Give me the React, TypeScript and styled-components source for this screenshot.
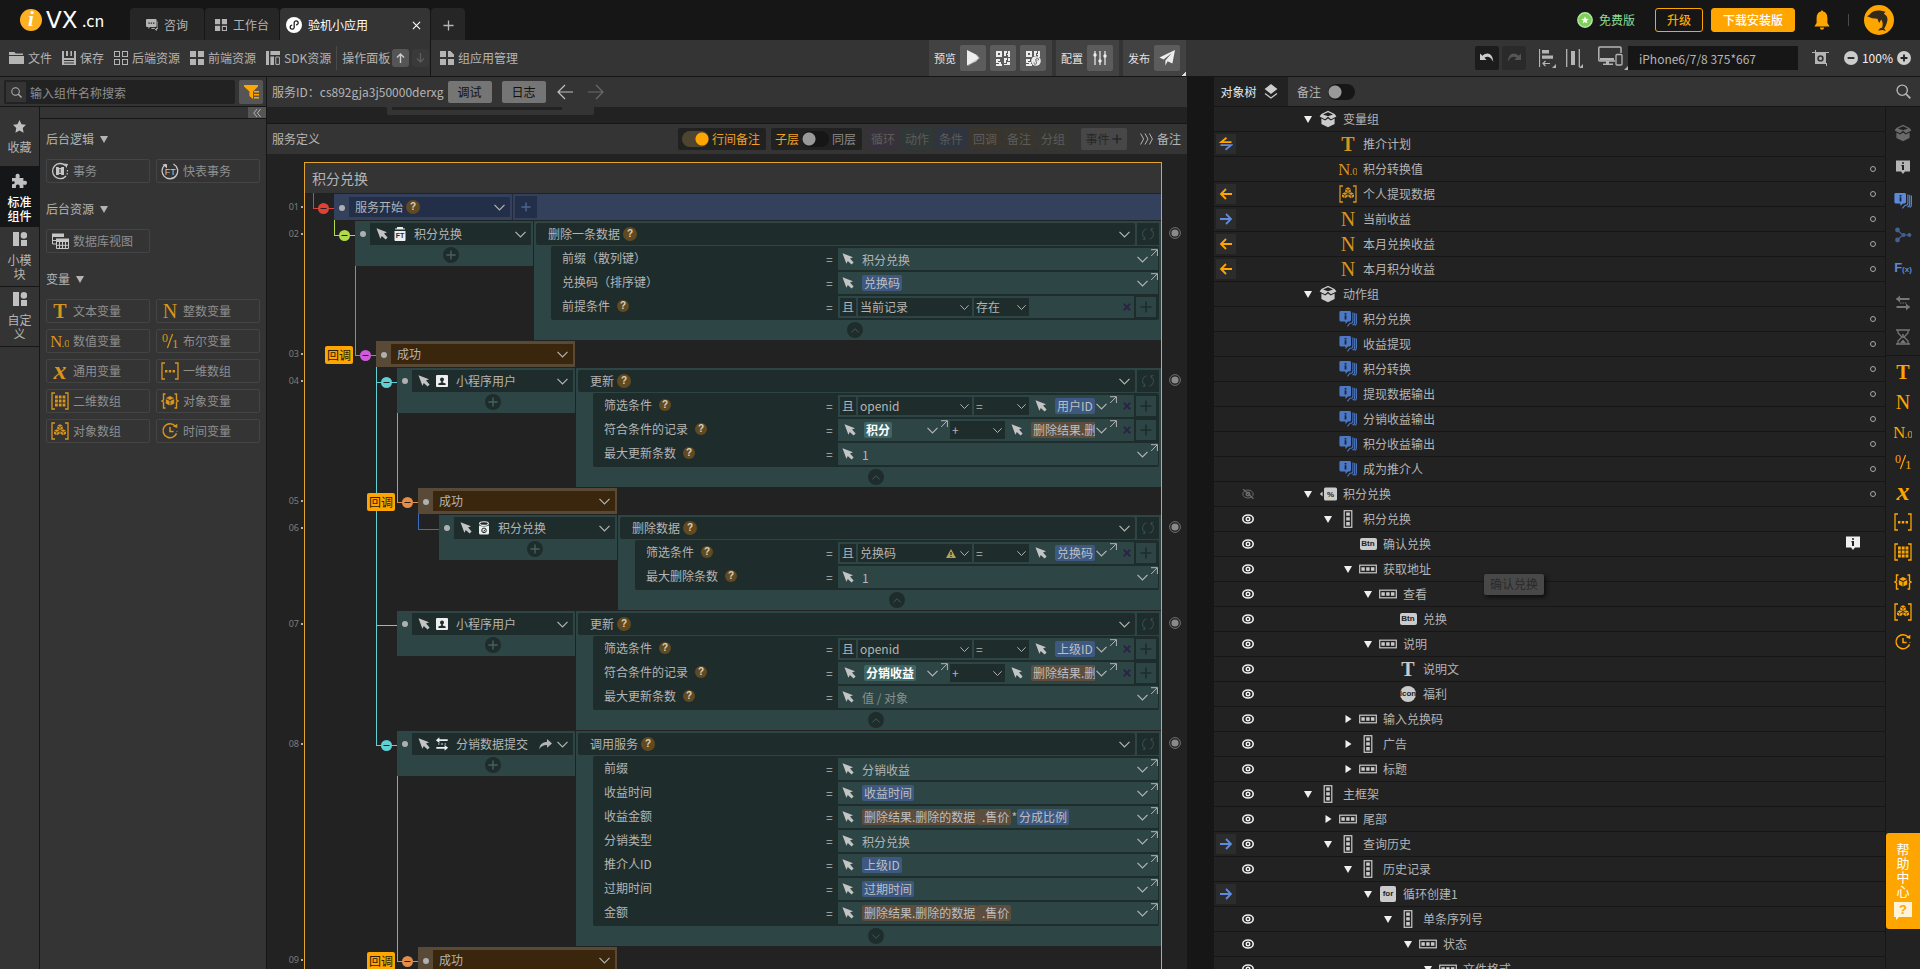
import React from "react";
import styled, { createGlobalStyle, css } from "styled-components";

const C = {
  black: "#161616",
  canvas: "#222222",
  panel: "#343434",
  text: "#b4b4b4",
  orange: "#ffa500",
  amber: "#d8941c",
  teal: "#2d4645",
  tealDark: "#1e2d2c",
  blue: "#5e8bdc",
};

const Global = createGlobalStyle`
  * { box-sizing: border-box; }
  body { margin: 0; background: ${C.black}; }
  body, button, input, select {
    font-family: "Noto Sans CJK SC", "Noto Sans", sans-serif;
    font-size: 12px;
    line-height: 16px;
    color: ${C.text};
  }
  button, input, select { border: 0; padding: 0; margin: 0; background: none; outline: 0; border-radius: 0; }
  button { cursor: pointer; display: inline-flex; align-items: center; justify-content: center; }
  select { appearance: none; cursor: pointer; }
  svg { display: block; flex: none; }
`;

/* ---------- icons ---------- */

const Svg = ({ w = 18, h, vb, children, color = "currentColor" }: any) => (
  <svg width={w} height={h ?? w} viewBox={vb ?? `0 0 ${w} ${h ?? w}`} fill={color} color={color === "currentColor" ? undefined : color} aria-hidden="true">
    {children}
  </svg>
);
const line = (sw = 1) => ({ fill: "none", stroke: "currentColor", strokeWidth: sw });

const Chevron = ({ w = 11 }: any) => (
  <Svg w={w} h={7} vb="0 0 11 7"><path d="M.5 .8 5.5 6 10.5 .8" {...line(1.2)} /></Svg>
);
const Corner = () => (
  <Svg w={8} vb="0 0 8 8"><path d="M1 .7H7.4V7M7.2 .8 1.2 7" {...line(1)} /></Svg>
);
const Pointer = () => (
  <Svg w={12} vb="0 0 12 12" color="#c4c4c4"><path d="M.5 .3 11 4.2 8 5.6 11.6 9.6 9.6 11.6 5.8 8 4.4 10.8Z" /></Svg>
);
const Plus = ({ w = 10, sw = 1.4 }: any) => (
  <Svg w={w} vb="0 0 10 10"><path d="M5 .4V9.6M.4 5H9.6" {...line(sw)} /></Svg>
);
const Cross = ({ w = 8 }: any) => (
  <Svg w={w} vb="0 0 8 8"><path d="M.8 .8 7.2 7.2M7.2 .8 .8 7.2" {...line(2)} /></Svg>
);
const Search = ({ w = 12 }: any) => (
  <Svg w={w} vb="0 0 14 14"><circle cx="5.8" cy="5.8" r="4.8" {...line(1.3)} /><path d="M9.3 9.3 13.4 13.4" {...line(1.6)} /></Svg>
);
const Refresh = () => (
  <Svg w={14} vb="0 0 14 14"><path d="M5.5 1.8A5.4 5.4 0 0 0 4 11.6M8.5 12.2A5.4 5.4 0 0 0 10 2.4M3 9.4 4.2 12.2 1.6 12.4M11 4.6 9.8 1.8 12.4 1.6" {...line(1)} /></Svg>
);
const Break = () => (
  <Svg w={12} vb="0 0 12 12" color="#8a8a8a"><circle cx="6" cy="6" r="5.4" fill="none" stroke="#707070" /><circle cx="6" cy="6" r="3.6" /></Svg>
);
const Squares = ({ outline }: any) => (
  <Svg w={14}>
    {[[0, 0], [8, 0], [0, 8], [8, 8]].map(([x, y]) => (
      <rect key={`${x}${y}`} x={x + (outline ? 0.5 : 0)} y={y + (outline ? 0.5 : 0)} width={outline ? 5 : 6} height={outline ? 5 : 6} {...(outline ? line(1) : {})} />
    ))}
  </Svg>
);
const Qr = ({ link }: any) => (
  <Svg w={16}>
    <path d="M1 1H7V7H1ZM3 3V5H5V3ZM1 9H5V11H3V12H6V14H7V16H1V14H4V13H1ZM9 1H12V3H11V6H9ZM13 1H15V7H13V5H12V4H13Z" fillRule="evenodd" />
    {link ? <><circle cx="11" cy="11" r="4.8" /><path d="M9 12.5a1.3 1.3 0 1 0 2-.6V10a1.3 1.3 0 1 1 1.6.6" fill="none" stroke="#5c5c5c" /></> : <path d="M9 8H12V10H11V13H9ZM13 8H15V11H13ZM12 12H15V15H9V14H12Z" />}
  </Svg>
);
const Cluster = () => (
  <g>
    {[[9, 4.6], [5.8, 9.6], [12.2, 9.6]].map(([x, y], i) => (
      <g key={i}><path d={`M${x} ${y - 2.4} ${x + 2.6} ${y - 1} ${x} ${y + 0.3} ${x - 2.6} ${y - 1}Z`} /><path d={`M${x - 2.8} ${y - 0.4} ${x - 0.3} ${y + 0.9}V${y + 3.6}L${x - 2.8} ${y + 2.2}ZM${x + 2.8} ${y - 0.4} ${x + 0.3} ${y + 0.9}V${y + 3.6}L${x + 2.8} ${y + 2.2}Z`} /></g>
    ))}
  </g>
);
const Brackets = () => <path d="M4 1H1V17H4M14 1H17V17H14" {...line(1.3)} />;

const Letter = styled.span<{ $size: number; $bold?: boolean; $italic?: boolean }>`
  font-family: "Liberation Serif", serif;
  font-size: ${(p) => p.$size}px;
  font-weight: ${(p) => (p.$bold ? 700 : 400)};
  font-style: ${(p) => (p.$italic ? "italic" : "normal")};
  line-height: 18px;
`;
const IconBox = styled.span<{ $w?: number; $color?: string }>`
  display: inline-flex;
  align-items: center;
  justify-content: center;
  flex: none;
  width: ${(p) => p.$w ?? 18}px;
  height: 18px;
  white-space: nowrap;
  color: ${(p) => p.$color ?? "inherit"};
`;
const Badge = styled.span<{ $round?: boolean; $square?: boolean }>`
  display: inline-flex;
  align-items: center;
  justify-content: center;
  width: ${(p) => (p.$round || p.$square ? 16 : 17)}px;
  height: ${(p) => (p.$round || p.$square ? 16 : 12)}px;
  border-radius: ${(p) => (p.$round ? "50%" : "2px")};
  background: #cbcbcb;
  color: #222;
  font: 700 8px/10px "Liberation Sans", sans-serif;
`;
const FxText = styled.span`
  font: 700 13px/18px "Liberation Sans", sans-serif;
  small { font-size: 8px; }
`;

const Icon = ({ name, color }: { name: string; color?: string }) => {
  let body: React.ReactNode = null;
  switch (name) {
    case "T": body = <Letter $size={20} $bold>T</Letter>; break;
    case "N": body = <Letter $size={20}>N</Letter>; break;
    case "N0": body = <Svg><text x="-1" y="14.5" fontSize="17" fontFamily="Liberation Serif">N</text><text x="10.5" y="14.5" fontSize="11" fontFamily="Liberation Serif">.0</text></Svg>; break;
    case "01": body = <Svg><text x="1" y="10" fontSize="12" fontFamily="Liberation Serif">0</text><path d="M11.6 2 6.4 16" {...line(1.2)} /><text x="11" y="16" fontSize="13" fontFamily="Liberation Serif">1</text></Svg>; break;
    case "X": body = <Letter $size={26} $bold $italic>x</Letter>; break;
    case "list": body = <Svg><Brackets /><path d="M4 8H6.4V10.4H4ZM7.8 8H10.2V10.4H7.8ZM11.6 8H14V10.4H11.6Z" /></Svg>; break;
    case "grid": body = <Svg><Brackets /><path d="M4 3.5H14.4V14.5H4Z" /><path d="M7.3 3V15M11.1 3V15M4 7H14.5M4 11H14.5" stroke="#2c2c2c" strokeWidth="1" /></Svg>; break;
    case "object": body = <Svg><path d="M4.5 2H2.5V8L1 9 2.5 10V16H4.5M13.5 2H15.5V8L17 9 15.5 10V16H13.5" {...line(1.4)} /><path d="M9 4 13 6 9 8 5 6ZM4.8 7 8.6 9V13.6L4.8 11.6ZM13.2 7 9.4 9V13.6L13.2 11.6Z" /></Svg>; break;
    case "objects": body = <Svg><Brackets /><Cluster /></Svg>; break;
    case "time": body = <Svg><path d="M14.4 4.2A7 7 0 1 0 16 9.4" {...line(1.5)} strokeDasharray="36 1.5 2 1.5" /><path d="M9 5V9.6H12.6" {...line(1.5)} /><path d="M12 4.6 16.4 1.8 16.2 6Z" /></Svg>; break;
    case "tx": body = <Svg><path d="M14.4 3.6A7.6 7.6 0 1 0 15 14" {...line(1.3)} /><path d="M13 1.6 17 2 15.4 6Z" /><path d="M5 5H7.8V6H10.2V5H13V13H10.2V12H7.8V13H5ZM8.4 7V11H9.6V7Z" /><path d="M16.4 8V9.6M16.2 11V12.6" {...line(1.2)} /></Svg>; break;
    case "ft": body = <Svg><path d="M5 2.2A7.8 7.8 0 1 0 12.4 2" {...line(1.3)} /><path d="M1.4 2.2H6V6.4Z" /><text x="9.2" y="12.6" fontSize="9" textAnchor="middle" fontFamily="Liberation Sans">FT</text></Svg>; break;
    case "table": body = <Svg><path d="M1 1.5H13V5H1ZM5 6.5H18V10H5Z" /><path d="M1.5 5V12H5M1.5 8.5H5M5.5 10V16.5H17.5V10M5.5 13.3H17.5M8.5 10V16.5M11.5 10V16.5M14.5 10V16.5" {...line(1)} /></Svg>; break;
    case "box": body = <Svg><path d="M9 .8 15.6 4 17.4 6.4 12 9.2 9 6.8 6 9.2 .6 6.4 2.4 4ZM9 2.2 4 4.4 9 6.2 14 4.4Z" fillRule="evenodd" /><path d="M2.4 8.6 6.2 10.4 9 8.4 11.8 10.4 15.6 8.6V14L9 17.2 2.4 14Z" /></Svg>; break;
    case "action": body = <Svg><path d="M1.6 1H10.6Q12 1 12 2.4V10Q12 11.4 10.6 11.4H9L6.6 14 6.4 11.4H1.6Q.4 11.4 .4 10V2.4Q.4 1 1.6 1Z" /><path d="M13.9 2.4V11Q13.9 13.2 12 13.2H11L8.4 16.4M15.7 3V12Q15.7 14.8 13.4 14.8M17.4 3.6V13Q17.4 15 15.6 15.4" {...line(1.1)} /><path d="M5.6 3H7.4V4.4H5.6ZM5.6 5.2H7.4V9.4H5.6Z" fill="#1b2540" /></Svg>; break;
    case "info": body = <Svg><path d="M2 2.5H16V13.5H11L9 16 7 13.5H2Z" /><path d="M8 4.2H10V5.8H8ZM7.4 7H10V12H8V8.2H7.4Z" fill="#222" /></Svg>; break;
    case "nodes": body = <Svg><circle cx="3.5" cy="4" r="2.4" /><circle cx="3.5" cy="14" r="2.4" /><circle cx="9.6" cy="9" r="2" /><circle cx="15.4" cy="9" r="2" /><path d="M3 4 9 9 3 14M9 9H16" {...line(1.2)} /></Svg>; break;
    case "fx": body = <FxText>F<small>(x)</small></FxText>; break;
    case "swap": body = <Svg><path d="M2.5 4H15.5V6H2.5ZM2.5 12H15.5V14H2.5Z" /><path d="M6 1.6 2 5 6 8.4ZM12 9.6 16 13 12 16.4Z" /><path d="M6 9H7.4M8.4 9H9.8M10.8 9H12.2" {...line(1.2)} /></Svg>; break;
    case "glass": body = <Svg><path d="M2 2H16M2 16H16M4 2V5L8 9 4 13V16M14 2V5L10 9 14 13V16" {...line(1.3)} /><path d="M6 15 9 11.6 12 15ZM8.2 6H9.8V10H8.2Z" /></Svg>; break;
    case "percent": body = <Svg><path d="M3.6 6.5 .8 9 3.6 11.5Z" /><rect x="5" y="2.5" width="13" height="13" rx="1.6" /><text x="11.5" y="12" fontSize="8" fontWeight="700" fill="#222" textAnchor="middle" fontFamily="Liberation Sans">%</text></Svg>; break;
    case "v": body = <Svg><rect x="5.2" y=".7" width="7.6" height="16.6" {...line(1.2)} /><path d="M7.2 2.4H10.8V5.8H7.2ZM7.2 7.2H10.8V10.6H7.2ZM7.2 12H10.8V15.4H7.2Z" /></Svg>; break;
    case "h": body = <Svg><rect x=".7" y="5.2" width="16.6" height="7.6" {...line(1.2)} /><path d="M2.4 7.2H5.8V10.8H2.4ZM7.2 7.2H10.6V10.8H7.2ZM12 7.2H15.4V10.8H12Z" /></Svg>; break;
    case "btn": body = <Badge>Btn</Badge>; break;
    case "ico": body = <Badge $round>Icon</Badge>; break;
    case "for": body = <Badge $square>for</Badge>; break;
  }
  return <IconBox $color={color}>{body}</IconBox>;
};

/* ---------- top bar ---------- */

const Page = styled.div`
  display: flex;
  flex-direction: column;
  height: 100vh;
  overflow: hidden;
  background: ${C.black};
`;
const TopBar = styled.header`
  display: flex;
  height: 40px;
  flex: none;
  align-items: stretch;
`;
const Logo = styled.a`
  display: flex;
  align-items: center;
  width: 130px;
  padding-left: 20px;
  color: #fff;
  text-decoration: none;
`;
const LogoDot = styled.span`
  width: 22px;
  height: 22px;
  margin-right: 4px;
  border-radius: 50%;
  background: #fdb022;
  font: italic 700 21px/21px "Liberation Serif", serif;
  text-align: center;
`;
const LogoName = styled.span`
  width: 36px;
  font: 23px/24px "DejaVu Sans", sans-serif;
`;
const LogoTld = styled.span`font: 16px/24px "Noto Sans CJK SC", sans-serif;`;
const Tabs = styled.nav`
  display: flex;
  align-items: flex-end;
  gap: 1px;
`;
const Tab = styled.button<{ $w: number; $active?: boolean }>`
  width: ${(p) => p.$w}px;
  height: 32px;
  padding: ${(p) => (p.$active ? "2px 9px 0 6px" : "2px 6px 0")};
  gap: 6px;
  border-radius: 4px 4px 0 0;
  background: ${(p) => (p.$active ? C.panel : "#262626")};
  color: ${(p) => (p.$active ? "#fff" : C.text)};
  justify-content: ${(p) => (p.$active ? "flex-start" : "center")};
  svg:last-child:not(:first-child) { margin-left: auto; }
`;
const TopRight = styled.div`
  display: flex;
  align-items: center;
  margin-left: auto;
  padding-right: 26px;
`;
const Free = styled.span`
  display: flex;
  align-items: center;
  gap: 6px;
  margin-right: 20px;
  color: #8fdc90;
`;
const Cta = styled.button<{ $solid?: boolean }>`
  height: 24px;
  width: ${(p) => (p.$solid ? 84 : 48)}px;
  margin-right: ${(p) => (p.$solid ? 19 : 8)}px;
  border: 1px solid ${C.orange};
  border-radius: 3px;
  background: ${(p) => (p.$solid ? C.orange : "transparent")};
  color: ${(p) => (p.$solid ? "#fff" : C.orange)};
  font-weight: 500;
`;
const ThinRule = styled.span`
  width: 1px;
  height: 12px;
  margin: 0 15px 0 18px;
  background: #4a4a4a;
`;

/* ---------- toolbar ---------- */

const Toolbar = styled.div`
  display: flex;
  align-items: center;
  flex: none;
  height: 37px;
  border-bottom: 1px solid ${C.black};
  background: ${C.panel};
`;
const ToolGroup = styled.div`
  display: flex;
  align-items: center;
  width: 430px;
  height: 36px;
  gap: 10px;
  padding-left: 9px;
`;
const Tool = styled.button`
  gap: 4px;
  height: 24px;
`;
const Rule = styled.span`
  width: 1px;
  height: 24px;
  margin: 0 -5px 0 -5px;
  background: #4a4a4a;
`;
const MoveBtns = styled.span`
  display: flex;
  gap: 3px;
  margin-left: -8px;
`;
const MoveBtn = styled.button<{ $dim?: boolean }>`
  width: 17px;
  height: 18px;
  border-radius: 3px;
  background: ${(p) => (p.$dim ? "#3a3a3a" : "#555")};
  color: ${(p) => (p.$dim ? "#5c5c5c" : "#ccc")};
`;
const AppManage = styled.div`
  display: flex;
  align-items: center;
  height: 36px;
  padding-left: 9px;
  border-left: 1px solid ${C.black};
`;
const RunGroups = styled.div`
  display: flex;
  gap: 4px;
  margin-left: 411px;
`;
const RunGroup = styled.div<{ $corner?: boolean }>`
  display: flex;
  align-items: center;
  gap: 4px;
  height: 36px;
  padding: 0 6px 0 5px;
  background: ${(p) => (p.$corner ? "linear-gradient(135deg, transparent 50%, #ddd 50%) right bottom / 4px 4px no-repeat, #424242" : "#424242")};
  color: #e4e4e4;
  font-size: 11px;
`;
const RunBtn = styled.button`
  width: 26px;
  height: 26px;
  border-radius: 2px;
  background: #5c5c5c;
  color: #eee;
`;
const ViewTools = styled.div`
  display: flex;
  align-items: center;
  margin-left: auto;
  padding-right: 9px;
`;
const HistBtn = styled.button<{ $dim?: boolean }>`
  width: 24px;
  height: 24px;
  margin-right: 3px;
  border-radius: 2px;
  background: ${(p) => (p.$dim ? "#2a2a2a" : "#1c1c1c")};
  color: ${(p) => (p.$dim ? "#555" : "#ccc")};
`;
const ViewBtn = styled.button`
  margin-left: 10px;
  width: 17px;
  height: 20px;
`;
const DeviceBtn = styled.button`
  width: 30px;
  height: 24px;
  margin-left: 15px;
`;
const DeviceInput = styled.input`
  width: 170px;
  height: 24px;
  margin-right: 14px;
  padding: 0 11px;
  background: ${C.black};
`;
const Zoom = styled.span`
  display: flex;
  align-items: center;
  gap: 4px;
  margin-left: 15px;
  color: #f0f0f0;
`;

/* ---------- body ---------- */

const Body = styled.div`
  display: flex;
  flex: 1;
  min-height: 0;
`;
const Left = styled.aside`
  display: flex;
  flex-direction: column;
  flex: none;
  width: 267px;
  background: ${C.panel};
  border-right: 1px solid ${C.black};
`;
const SearchRow = styled.div`
  display: flex;
  gap: 4px;
  height: 30px;
  padding: 3px 3px 0 4px;
  border-bottom: 1px solid ${C.black};
`;
const SearchField = styled.label`
  display: flex;
  align-items: center;
  flex: 1;
  height: 24px;
  padding-left: 2px;
  border-radius: 2px;
  background: ${C.canvas};
`;
const SearchIcon = styled.span`
  display: flex;
  align-items: center;
  justify-content: center;
  width: 20px;
  height: 20px;
  background: ${C.panel};
`;
const SearchInput = styled.input`
  flex: 1;
  min-width: 0;
  height: 24px;
  padding-left: 4px;
  &::placeholder { color: #8e8e8e; opacity: 1; }
`;
const FilterBtn = styled.button`
  width: 24px;
  height: 24px;
  border-radius: 2px;
  background: #555;
  color: ${C.orange};
`;
const LeftBody = styled.div`
  display: flex;
  flex: 1;
  min-height: 0;
`;
const Rail = styled.nav`
  width: 40px;
  border-right: 1px solid ${C.black};
`;
const RailItem = styled.button<{ $active?: boolean; $h: number }>`
  display: flex;
  flex-direction: column;
  justify-content: flex-start;
  width: 39px;
  height: ${(p) => p.$h}px;
  padding: ${(p) => (p.$active ? 7 : 5)}px 6px 0;
  gap: 7px;
  line-height: 14px;
  border-bottom: 1px solid ${(p) => (p.$h > 59 ? C.black : C.panel)};
  background: ${(p) => (p.$active ? "#151617" : "none")};
  color: ${(p) => (p.$active ? "#fff" : C.text)};
  font-weight: ${(p) => (p.$active ? 500 : 400)};
  svg { color: #c0c0c0; }
`;
const RailPad = styled.span`height: 1px;`;
const Palette = styled.div`flex: 1;`;
const CollapseRow = styled.div`
  display: flex;
  justify-content: flex-end;
  height: 12px;
  border-bottom: 1px solid ${C.black};
`;
const Collapse = styled.button`
  width: 18px;
  height: 11px;
  background: #555;
`;
const Section = styled.section`
  padding: 0 6px;
  margin-bottom: 6px;
`;
const SectionHead = styled.h2`
  display: flex;
  align-items: center;
  gap: 6px;
  height: 40px;
  margin: 0;
  font-size: 12px;
  font-weight: 400;
`;
const Grid = styled.div`
  display: grid;
  grid-template-columns: 104px 104px;
  gap: 6px;
`;
const PaletteBtn = styled.button`
  justify-content: flex-start;
  gap: 4px;
  height: 24px;
  padding-left: 4px;
  border: 1px solid #444;
  border-radius: 2px;
  color: #8f8f8f;
`;

/* ---------- editor ---------- */

const Center = styled.main`
  display: flex;
  flex-direction: column;
  flex: 1;
  min-width: 0;
  background: ${C.canvas};
`;
const ServiceBar = styled.div`
  display: flex;
  align-items: center;
  flex: none;
  height: 30px;
  padding-left: 5px;
  background: ${C.panel};
`;
const ServiceId = styled.span`margin-right: -6px;`;
const GreyBtn = styled.button`
  width: 44px;
  height: 22px;
  margin-left: 10px;
  border-radius: 2px;
  background: #757575;
  color: #111;
`;
const ArrowBtn = styled.button<{ $dim?: boolean }>`
  width: 16px;
  margin-left: ${(p) => (p.$dim ? 15 : 11)}px;
  color: ${(p) => (p.$dim ? "#6a6a6a" : "#c0c0c0")};
`;
const Strip = styled.div`
  flex: none;
  height: 17px;
  padding-left: 120px;
  border-bottom: 1px solid ${C.black};
`;
const StripCard = styled.div`
  width: 207px;
  height: 8px;
  padding-left: 5px;
  border-radius: 0 0 2px 2px;
  background: ${C.panel};
`;
const StripSlot = styled.div`
  width: 170px;
  height: 3px;
  background: ${C.canvas};
`;
const DefBar = styled.div`
  display: flex;
  align-items: center;
  flex: none;
  height: 30px;
  padding: 0 6px 0 5px;
  background: ${C.panel};
`;
const Push = styled.span`flex: 1;`;
const Pill = styled.label`
  display: flex;
  align-items: center;
  gap: 3px;
  height: 22px;
  margin-right: 5px;
  padding: 0 6px 0 4px;
  border-radius: 2px;
  background: #212121;
  color: #8c8c8c;
`;
const Hot = styled.span`color: #f0a126;`;
const Switch = styled.input<{ $tone: string }>`
  appearance: none;
  width: 27px;
  height: 16px;
  border-radius: 8px;
  background: radial-gradient(circle at 7px 8px, #999 0 6px, transparent 7px), ${C.black};
  &:checked { background: radial-gradient(circle at 20px 8px, ${C.orange} 0 6px, transparent 7px), ${(p) => p.$tone}; }
`;
const Chip = styled.button<{ $bg: string }>`
  width: 32px;
  height: 22px;
  margin-right: 2px;
  border-radius: 2px;
  background: ${(p) => p.$bg};
  color: #5c5c5c;
`;
const EventBtn = styled.button`
  width: 46px;
  height: 22px;
  margin: 0 13px 0 10px;
  gap: 3px;
  border-radius: 2px;
  background: #474747;
  color: #272727;
`;
const NoteBtn = styled.button`gap: 4px;`;

const Canvas = styled.div`
  position: relative;
  flex: 1;
  min-height: 0;
  overflow: hidden;
  padding-top: 8px;
`;
const Links = styled.svg`
  position: absolute;
  left: 0;
  top: 0;
`;
const Row = styled.div`
  position: relative;
  display: grid;
  grid-template-columns: 37px minmax(0, 1fr) 25px;
`;
const LineNo = styled.span`
  display: flex;
  align-items: center;
  justify-content: flex-end;
  gap: 2px;
  height: 27px;
  padding-right: 1px;
  color: #7d7d7d;
  font: 9px/12px "Noto Sans", sans-serif;
  &::after { content: ""; width: 2px; height: 2px; background: #b0b0b0; }
`;
const Framed = styled.div`
  display: flex;
  align-items: flex-start;
  min-width: 0;
  padding-top: 1px;
  border: solid #e3a52f;
  border-width: 0 1px;
`;
const FrameTitle = styled.h1`
  height: 31px;
  margin: 0;
  padding-left: 7px;
  border: 1px solid #e3a52f;
  border-bottom: 0;
  background: ${C.panel};
  font-size: 14px;
  font-weight: 400;
  line-height: 30px;
`;
const BreakBtn = styled.button`
  height: 12px;
  margin-top: 7px;
`;
const Indent = styled.div<{ $level: number }>`
  display: flex;
  justify-content: flex-end;
  flex: none;
  width: ${(p) => 29 + 21 * p.$level}px;
`;
const CallbackTag = styled.span`
  width: 28px;
  height: 18px;
  margin: 5px 23px 0 0;
  border-radius: 2px;
  background: ${C.orange};
  color: #2a2005;
  line-height: 18px;
  text-align: center;
`;
const dot = css`
  &::before {
    content: "";
    flex: none;
    width: 6px;
    height: 6px;
    margin: 8px 4px 0 3px;
    border-radius: 50%;
    background: #b0b0b0;
  }
`;
const EventBlock = styled.div<{ $kind: "start" | "callback" }>`
  display: flex;
  flex: ${(p) => (p.$kind === "start" ? 1 : "none")};
  width: ${(p) => (p.$kind === "start" ? "auto" : "199px")};
  height: 26px;
  padding: 3px 2px;
  background: ${(p) => (p.$kind === "start" ? "#33415d" : "#594a37")};
  ${dot}
`;
const EventBox = styled.div<{ $kind: "start" | "callback" }>`
  display: flex;
  align-items: center;
  flex: ${(p) => (p.$kind === "start" ? "none" : 1)};
  width: 161px;
  height: 20px;
  padding: 0 5px 0 6px;
  background: ${(p) => (p.$kind === "start" ? "#232f48" : "#39260c")};
`;
const AddStep = styled.button`
  width: 26px;
  height: 26px;
  margin: -3px 0 0 2px;
  border-left: 1px solid #222b3e;
  background: linear-gradient(#232f48, #232f48) 2px 2px / 22px 22px no-repeat;
  color: #4a6694;
`;
const End = styled.span`
  display: flex;
  align-items: center;
  gap: 5px;
  margin-left: auto;
  color: #b4b4b4;
`;
const Help = styled.button<{ $s: number }>`
  flex: none;
  width: ${(p) => p.$s}px;
  height: ${(p) => p.$s}px;
  margin-left: ${(p) => (p.$s === 14 ? 2 : 7)}px;
  border-radius: 50%;
  background: #614a22;
  color: #ddd0b4;
  font: 700 10px/12px "Liberation Sans", sans-serif;
`;
const ObjectBlock = styled.div`
  display: flex;
  flex: none;
  width: 178px;
  height: 45px;
  margin-right: 1px;
  padding: 2px;
  background: ${C.teal};
  ${dot}
`;
const ObjectCol = styled.div`
  display: flex;
  flex-direction: column;
  align-items: center;
  flex: 1;
  gap: 2px;
`;
const ObjectBox = styled.div`
  display: flex;
  align-items: center;
  align-self: stretch;
  height: 22px;
  padding: 0 5px 0 6px;
  background: ${C.tealDark};
`;
const ObjectIcon = styled.span`
  display: flex;
  justify-content: center;
  width: 14px;
  margin: 0 7px 0 5px;
  color: #eee;
`;
const RoundBtn = styled.button`
  width: 16px;
  height: 16px;
  border-radius: 50%;
  background: ${C.tealDark};
  color: #47605e;
`;
const ActionBlock = styled.div`
  flex: 1;
  min-width: 0;
  padding: 2px 2px 0;
  background: ${C.teal};
`;
const ActionHead = styled.div`
  display: flex;
  gap: 2px;
  height: 22px;
`;
const ActionName = styled.div`
  display: flex;
  align-items: center;
  flex: 1;
  padding: 0 5px 0 12px;
  border-radius: 2px;
  background: ${C.tealDark};
`;
const RefreshBtn = styled.button`
  width: 22px;
  height: 22px;
  background: ${C.tealDark};
  color: #35504e;
`;
const Params = styled.div`
  margin: 1px 0 0 15px;
  padding: 2px 1px 0 11px;
  border-radius: 2px;
  background: ${C.tealDark};
`;
const ParamRow = styled.div`
  display: flex;
  height: 24px;
`;
const ParamLabel = styled.span`
  display: flex;
  align-items: center;
  flex: 1;
  height: 20px;
`;
const Eq = styled.span`
  width: 12px;
  line-height: 22px;
`;
const Value = styled.div`
  position: relative;
  display: flex;
  align-items: center;
  flex: none;
  width: 320px;
  height: 22px;
  padding: 0 10px 0 4px;
  background: ${C.teal};
`;
const CondWrap = styled.div`
  display: flex;
  flex: none;
  align-items: center;
  gap: 2px;
  width: 320px;
  height: 22px;
`;
const Cond = styled.div`
  display: flex;
  align-items: center;
  gap: 2px;
  flex: 1;
  min-width: 0;
  height: 22px;
  padding: 0 3px 0 2px;
  background: ${C.teal};
`;
const PlusBox = styled.button`
  width: 20px;
  height: 20px;
  margin-right: 2px;
  background: ${C.teal};
  color: ${C.tealDark};
`;
const AndBox = styled.button`
  width: 16px;
  height: 18px;
  background: ${C.tealDark};
`;
const PickWrap = styled.span<{ $w: number }>`
  display: flex;
  align-items: center;
  gap: 4px;
  flex: none;
  width: ${(p) => p.$w}px;
  height: 18px;
  padding-right: 3px;
  background: ${C.tealDark};
`;
const Select = styled.select<{ $grow?: boolean }>`
  flex: ${(p) => (p.$grow ? 1 : "none")};
  min-width: 0;
  height: 18px;
  padding-left: ${(p) => (p.$grow ? 2 : 0)}px;
`;
const ValueInput = styled.input`
  flex: 1;
  min-width: 0;
  height: 20px;
  margin-left: 8px;
  &::placeholder { color: #86908f; opacity: 1; }
`;
const Token = styled.span<{ $tone: string }>`
  flex: none;
  height: 16px;
  padding: 0 2px;
  border-radius: 2px;
  line-height: 16px;
  white-space: nowrap;
  background: ${(p) => (p.$tone === "blue" ? "#3d5981" : p.$tone === "brown" ? "#5d4d3c" : "#3f6664")};
  color: ${(p) => (p.$tone === "teal" ? "#fff" : "#bcbfc2")};
  font-weight: ${(p) => (p.$tone === "teal" ? 700 : 400)};
`;
const Tokens = styled.span`
  display: flex;
  align-items: center;
  flex: 1;
  min-width: 0;
  margin-left: 8px;
`;
const CornerBtn = styled.button`
  align-self: flex-start;
  margin: 1px 0 0 2px;
`;
const ValueCorner = styled.button`
  position: absolute;
  right: 0;
  top: 1px;
`;
const Ref = styled.span<{ $w: number }>`
  display: flex;
  align-items: center;
  flex: none;
  width: ${(p) => p.$w}px;
  height: 22px;
  padding-left: 4px;
`;
const Clip = styled.span<{ $w: number }>`
  display: flex;
  flex: none;
  width: ${(p) => p.$w}px;
  height: 16px;
  margin: 0 1px 0 8px;
  overflow: hidden;
`;
const RemoveBtn = styled.button`
  margin-left: auto;
  color: #2b2444;
`;
const ActionFoot = styled.div`
  display: flex;
  align-items: center;
  justify-content: center;
  height: 20px;
  margin-left: 15px;
`;
const Flip = styled.span<{ $up?: boolean }>`transform: rotate(${(p) => (p.$up ? 180 : 0)}deg);`;

/* ---------- object tree ---------- */

const Right = styled.aside`
  display: flex;
  flex-direction: column;
  flex: none;
  width: 706px;
  margin-left: 27px;
  background: ${C.canvas};
`;
const TreeHead = styled.div`
  display: flex;
  align-items: center;
  flex: none;
  height: 30px;
  padding-right: 9px;
  border-bottom: 1px solid ${C.black};
  background: ${C.panel};
`;
const TreeTab = styled.button`
  width: 74px;
  height: 29px;
  gap: 7px;
  margin-right: 9px;
  padding-right: 4px;
  background: ${C.canvas};
  color: #e6e6e6;
`;
const NoteToggle = styled.label`
  display: flex;
  align-items: center;
  gap: 7px;
`;
const SearchBtn = styled.button`margin-left: auto;`;
const TreeBody = styled.div`
  position: relative;
  display: flex;
  flex: 1;
  min-height: 0;
`;
const Tree = styled.ul`
  flex: 1;
  margin: 0;
  padding: 0;
  overflow: hidden;
  list-style: none;
  border-right: 1px solid ${C.black};
`;
const TreeRow = styled.li`
  display: flex;
  align-items: center;
  height: 25px;
  padding: 0 9px 0 2px;
  border-bottom: 1px solid ${C.black};
`;
const FlowCell = styled.span<{ $on: boolean }>`
  display: flex;
  align-items: center;
  justify-content: center;
  width: 20px;
  height: 20px;
  background: ${(p) => (p.$on ? "#2c2c2c" : "none")};
`;
const EyeCell = styled.span<{ $off?: boolean }>`
  display: flex;
  justify-content: center;
  width: 24px;
  color: ${(p) => (p.$off ? "#6a6a6a" : "#f0f0f0")};
`;
const Twist = styled.button<{ $level: number }>`
  width: 8px;
  height: 16px;
  margin: 0 7px 0 ${(p) => 44 + 20 * p.$level}px;
  color: #f0f0f0;
`;
const NodeName = styled.span`
  flex: 1;
  margin-left: 6px;
`;
const InfoMark = styled.span`margin-right: 14px;`;
const Ring = styled.i`
  width: 6px;
  height: 6px;
  border: 1px solid #a8a8a8;
  border-radius: 50%;
`;
const ToolRail = styled.nav`
  width: 34px;
  flex: none;
`;
const ToolSet = styled.div<{ $pitch: number }>`
  display: grid;
  grid-auto-rows: ${(p) => p.$pitch}px;
  justify-items: center;
  padding: ${(p) => (p.$pitch === 34 ? "9px 0 1px" : "1px 0 0")};
  border-bottom: ${(p) => (p.$pitch === 34 ? `1px solid ${C.black}` : 0)};
`;
const RailBtn = styled.button`width: 30px;`;
const HelpCenter = styled.button`
  position: absolute;
  right: 0;
  bottom: 40px;
  flex-direction: column;
  width: 34px;
  height: 96px;
  gap: 4px;
  border-radius: 3px 0 0 3px;
  background: ${C.orange};
  color: #fff;
  font-size: 13px;
  line-height: 14px;
  span { width: 13px; }
`;
const Tooltip = styled.div`
  position: absolute;
  left: 270px;
  top: 467px;
  height: 21px;
  padding: 0 6px;
  border-radius: 2px;
  background: #484848;
  box-shadow: 2px 2px 4px #0c0c0c;
  color: #2a2a2a;
  line-height: 20px;
`;

/* ---------- data ---------- */

type Param = { label: string; help?: boolean; value: React.ReactNode };
type Step =
  | { no: string; kind: "start" }
  | { no: string; kind: "callback"; level: number }
  | { no: string; kind: "action"; level: number; icon: string; object: string; share?: boolean; action: string; params: Param[]; more?: boolean };

const ValueTail = () => (
  <>
    <End as="button" aria-label="展开"><Chevron /></End>
    <ValueCorner aria-label="弹出编辑"><Corner /></ValueCorner>
  </>
);
const Text = ({ v = "", hint }: { v?: string; hint?: string }) => (
  <Value><Pointer /><ValueInput defaultValue={v} placeholder={hint} aria-label="值" /><ValueTail /></Value>
);
const Chips = ({ items }: { items: [string, string][] }) => (
  <Value>
    <Pointer />
    <Tokens>{items.map(([t, tone], i) => (tone ? <Token key={i} $tone={tone}>{t}</Token> : <span key={i}>{t}</span>))}</Tokens>
    <ValueTail />
  </Value>
);
const Warn = () => (
  <Svg w={10} h={9} color="#b8a150"><path d="M5 0 10 9H0Z" /><path d="M4.4 3H5.6V6H4.4ZM4.4 7H5.6V8H4.4Z" fill="#222" /></Svg>
);
const Pick = ({ w, v, warn }: { w: number; v: string; warn?: boolean }) => (
  <PickWrap $w={w}>
    <Select $grow aria-label={v}><option>{v}</option></Select>
    {warn && <Warn />}
    <Chevron w={9} />
  </PickWrap>
);
const Reference = ({ w, clip, tone, text }: { w: number; clip: number; tone: string; text: string }) => (
  <Ref $w={w}>
    <Pointer />
    <Clip $w={clip}><Token $tone={tone}>{text}</Token></Clip>
    <Chevron />
    <CornerBtn aria-label="弹出编辑"><Corner /></CornerBtn>
  </Ref>
);
const CondTail = () => <RemoveBtn aria-label="删除"><Cross /></RemoveBtn>;
const Where = ({ field, op, token, warn }: { field: string; op: string; token?: string; warn?: boolean }) => (
  <CondWrap>
    <Cond>
      <AndBox>且</AndBox>
      <Pick w={114} v={field} warn={warn} />
      <Pick w={55} v={op} />
      {token && <Reference w={88} clip={40} tone="blue" text={token} />}
      <CondTail />
    </Cond>
    <PlusBox aria-label="添加"><Plus w={12} /></PlusBox>
  </CondWrap>
);
const Assign = ({ field }: { field: string }) => (
  <CondWrap>
    <Cond>
      <Reference w={108} clip={62} tone="teal" text={field} />
      <Pick w={55} v="+" />
      <Reference w={112} clip={64} tone="brown" text="删除结果.删" />
      <CondTail />
    </Cond>
    <PlusBox aria-label="添加"><Plus w={12} /></PlusBox>
  </CondWrap>
);

const priceTokens: [string, string][] = [["删除结果.删除的数据", "brown"], ["\u00a0.售价", "brown"]];

const steps: Step[] = [
  { no: "01", kind: "start" },
  {
    no: "02", kind: "action", level: 1, icon: "ft", object: "积分兑换", action: "删除一条数据",
    params: [
      { label: "前缀（散列键）", value: <Text v="积分兑换" /> },
      { label: "兑换码（排序键）", value: <Chips items={[["兑换码", "blue"]]} /> },
      { label: "前提条件", help: true, value: <Where field="当前记录" op="存在" /> },
    ],
  },
  { no: "03", kind: "callback", level: 2 },
  {
    no: "04", kind: "action", level: 3, icon: "user", object: "小程序用户", action: "更新",
    params: [
      { label: "筛选条件", help: true, value: <Where field="openid" op="=" token="用户ID" /> },
      { label: "符合条件的记录", help: true, value: <Assign field="积分" /> },
      { label: "最大更新条数", help: true, value: <Text v="1" /> },
    ],
  },
  { no: "05", kind: "callback", level: 4 },
  {
    no: "06", kind: "action", level: 5, icon: "db", object: "积分兑换", action: "删除数据",
    params: [
      { label: "筛选条件", help: true, value: <Where field="兑换码" op="=" token="兑换码" warn /> },
      { label: "最大删除条数", help: true, value: <Text v="1" /> },
    ],
  },
  {
    no: "07", kind: "action", level: 3, icon: "user", object: "小程序用户", action: "更新",
    params: [
      { label: "筛选条件", help: true, value: <Where field="openid" op="=" token="上级ID" /> },
      { label: "符合条件的记录", help: true, value: <Assign field="分销收益" /> },
      { label: "最大更新条数", help: true, value: <Text hint="值 / 对象" /> },
    ],
  },
  {
    no: "08", kind: "action", level: 3, icon: "swap", object: "分销数据提交", share: true, action: "调用服务", more: true,
    params: [
      { label: "前缀", value: <Text v="分销收益" /> },
      { label: "收益时间", value: <Chips items={[["收益时间", "blue"]]} /> },
      { label: "收益金额", value: <Chips items={[...priceTokens, ["*", ""], ["分成比例", "blue"]]} /> },
      { label: "分销类型", value: <Text v="积分兑换" /> },
      { label: "推介人ID", value: <Chips items={[["上级ID", "blue"]]} /> },
      { label: "过期时间", value: <Chips items={[["过期时间", "blue"]]} /> },
      { label: "金额", value: <Chips items={priceTokens} /> },
    ],
  },
  { no: "09", kind: "callback", level: 4 },
];

/* parent edges of the flow, in canvas coordinates: x and y of the start, then y values of the branches */
const links: { color: string; x: number; y: number; to: number[]; bare?: number[] }[] = [
  { color: "#dd4335", x: 46, y: 39, to: [54] },
  { color: "#b1d94c", x: 67, y: 66, to: [81] },
  { color: "#d35ae0", x: 88, y: 112, to: [201] },
  { color: "#5fd0d3", x: 109, y: 213, to: [228, 591], bare: [471] },
  { color: "#e48c48", x: 130, y: 259, to: [348] },
  { color: "#3d6cc4", x: 151, y: 360, to: [], bare: [375] },
  { color: "#e48c48", x: 130, y: 622, to: [807] },
];

const ObjIcon = ({ name }: { name: string }) => {
  if (name === "ft")
    return <Svg w={12} h={14}><path d="M1 1.5H11V2.5H1ZM.5 4H11.5V13Q11.5 14 10.5 14H1.5Q.5 14 .5 13ZM3 0H9V1.5H3Z" /><text x="6" y="11" fontSize="7" fontWeight="700" fill="#1e2d2c" textAnchor="middle" fontFamily="Liberation Sans">FT</text></Svg>;
  if (name === "user")
    return <Svg w={12}><rect width="12" height="12" rx="1" /><circle cx="6" cy="4.4" r="2" fill="#1e2d2c" /><path d="M5.2 5.5H6.8V7.4L9.6 8.6V10H2.4V8.6L5.2 7.4Z" fill="#1e2d2c" /></Svg>;
  if (name === "db")
    return <Svg w={12} h={14}><ellipse cx="6" cy="2.6" rx="4.4" ry="1.8" {...line(1.1)} /><path d="M1 4.4Q6 6.6 11 4.4V12Q11 13.6 9.6 13.6H2.4Q1 13.6 1 12Z" /><circle cx="6" cy="9.4" r="2.3" fill="none" stroke="#1e2d2c" /><path d="M4.8 9.4 5.8 10.4 7.4 8.4" fill="none" stroke="#1e2d2c" strokeWidth=".9" /></Svg>;
  return <Svg w={14} vb="2 1 14 16"><path d="M4 3.6H15.5V5.6H4ZM2.5 12.4H14V14.4H2.5Z" /><path d="M6 1.4 2 4.6 6 7.8ZM12 10.2 16 13.4 12 16.6Z" /><path d="M4.5 9H6M8 9H10M12 9H13.5" {...line(1.4)} /></Svg>;
};

const StepBody = ({ s }: { s: Step }) => {
  if (s.kind === "start")
    return (
      <>
        <Indent $level={0} />
        <EventBlock $kind="start">
          <EventBox $kind="start">
            <Select aria-label="事件"><option>服务开始</option></Select>
            <Help $s={14}>?</Help>
            <End><Chevron /></End>
          </EventBox>
          <AddStep aria-label="添加"><Plus /></AddStep>
        </EventBlock>
      </>
    );
  if (s.kind === "callback")
    return (
      <>
        <Indent $level={s.level}><CallbackTag>回调</CallbackTag></Indent>
        <EventBlock $kind="callback">
          <EventBox $kind="callback">
            <Select aria-label="回调"><option>成功</option></Select>
            <End><Chevron /></End>
          </EventBox>
        </EventBlock>
      </>
    );
  return (
    <>
      <Indent $level={s.level} />
      <ObjectBlock>
        <ObjectCol>
          <ObjectBox>
            <Pointer />
            <ObjectIcon><ObjIcon name={s.icon} /></ObjectIcon>
            <Select aria-label="对象"><option>{s.object}</option></Select>
            <End>
              {s.share && <Svg w={13} h={11}><path d="M8 0 13 4.4 8 8.8V6Q2.6 5.8 0 10.6 .6 3.2 8 2.8Z" /></Svg>}
              <Chevron />
            </End>
          </ObjectBox>
          <RoundBtn aria-label="添加动作"><Plus /></RoundBtn>
        </ObjectCol>
      </ObjectBlock>
      <ActionBlock>
        <ActionHead>
          <ActionName>
            <Select aria-label="动作"><option>{s.action}</option></Select>
            <Help $s={14}>?</Help>
            <End><Chevron /></End>
          </ActionName>
          <RefreshBtn aria-label="刷新"><Refresh /></RefreshBtn>
        </ActionHead>
        <Params>
          {s.params.map((p) => (
            <ParamRow key={p.label}>
              <ParamLabel>{p.label}{p.help && <Help $s={12}>?</Help>}</ParamLabel>
              <Eq>=</Eq>
              {p.value}
            </ParamRow>
          ))}
        </Params>
        <ActionFoot>
          <RoundBtn aria-label="收起"><Flip $up={!s.more}><Chevron w={8} /></Flip></RoundBtn>
        </ActionFoot>
      </ActionBlock>
    </>
  );
};

type Node = { n: string; i: string; l: number; t?: "down" | "right"; ring?: boolean; flow?: "in" | "out" | "both"; eye?: boolean | "off"; info?: boolean };
const nodes: Node[] = [
  { n: "变量组", i: "box", l: 0, t: "down" },
  { n: "推介计划", i: "T", l: 1, flow: "both" },
  { n: "积分转换值", i: "N0", l: 1, ring: true },
  { n: "个人提现数据", i: "objects", l: 1, ring: true, flow: "in" },
  { n: "当前收益", i: "N", l: 1, ring: true, flow: "out" },
  { n: "本月兑换收益", i: "N", l: 1, ring: true, flow: "in" },
  { n: "本月积分收益", i: "N", l: 1, ring: true, flow: "in" },
  { n: "动作组", i: "box", l: 0, t: "down" },
  ...["积分兑换", "收益提现", "积分转换", "提现数据输出", "分销收益输出", "积分收益输出", "成为推介人"].map((n) => ({ n, i: "action", l: 1, ring: true })),
  { n: "积分兑换", i: "percent", l: 0, t: "down", ring: true, eye: "off" },
  { n: "积分兑换", i: "v", l: 1, t: "down", eye: true },
  { n: "确认兑换", i: "btn", l: 2, eye: true, info: true },
  { n: "获取地址", i: "h", l: 2, t: "down", eye: true },
  { n: "查看", i: "h", l: 3, t: "down", eye: true },
  { n: "兑换", i: "btn", l: 4, eye: true },
  { n: "说明", i: "h", l: 3, t: "down", eye: true },
  { n: "说明文", i: "T", l: 4, eye: true },
  { n: "福利", i: "ico", l: 4, eye: true },
  { n: "输入兑换码", i: "h", l: 2, t: "right", eye: true },
  { n: "广告", i: "v", l: 2, t: "right", eye: true },
  { n: "标题", i: "h", l: 2, t: "right", eye: true },
  { n: "主框架", i: "v", l: 0, t: "down", eye: true },
  { n: "尾部", i: "h", l: 1, t: "right", eye: true },
  { n: "查询历史", i: "v", l: 1, t: "down", eye: true, flow: "out" },
  { n: "历史记录", i: "v", l: 2, t: "down", eye: true },
  { n: "循环创建1", i: "for", l: 3, t: "down", flow: "out" },
  { n: "单条序列号", i: "v", l: 4, t: "down", eye: true },
  { n: "状态", i: "h", l: 5, t: "down", eye: true },
  { n: "文件格式", i: "h", l: 6, t: "down", eye: true },
];
const nodeColor = (n: Node) =>
  n.i === "action" ? "#4d78c4" : n.l === 1 && ["T", "N", "N0", "objects"].includes(n.i) ? C.amber : "#cbcbcb";

const FlowIcon = ({ kind }: { kind: "in" | "out" | "both" }) => {
  if (kind === "both")
    return <Svg w={14}><path d="M12.5 5.2H2L7.5 .8" fill="none" stroke={C.orange} strokeWidth="1.8" /><path d="M1.5 8.2H12L6.5 12.8" fill="none" stroke={C.blue} strokeWidth="1.8" /></Svg>;
  return kind === "in"
    ? <Svg w={14} h={12}><path d="M13 6H2M7 1 2 6 7 11" fill="none" stroke={C.orange} strokeWidth="1.8" /></Svg>
    : <Svg w={14} h={12}><path d="M1 6H12M7 1 12 6 7 11" fill="none" stroke={C.blue} strokeWidth="1.8" /></Svg>;
};
const Eye = ({ off }: { off: boolean }) => (
  <Svg w={12} h={10}>
    <ellipse cx="6" cy="5" rx="5.2" ry="4" {...line(off ? 1 : 1.6)} />
    <circle cx="6" cy="5" r="1.8" {...line(1.4)} />
    {off && <path d="M1 0 11.5 9.8" {...line(1.2)} />}
  </Svg>
);
const Down = () => <Svg w={8} h={7}><path d="M0 0H8L4 7Z" /></Svg>;
const RightTri = () => <Svg w={7} h={8}><path d="M.5 0 6.5 4 .5 8Z" /></Svg>;

const palette: [string, [string, string][]][] = [
  ["后台逻辑", [["tx", "事务"], ["ft", "快表事务"]]],
  ["后台资源", [["table", "数据库视图"]]],
  ["变量", [["T", "文本变量"], ["N", "整数变量"], ["N0", "数值变量"], ["01", "布尔变量"], ["X", "通用变量"], ["list", "一维数组"], ["grid", "二维数组"], ["object", "对象变量"], ["objects", "对象数组"], ["time", "时间变量"]]],
];

const Module = () => (
  <Svg w={14}><path d="M0 0H6V14H0ZM8 8H14V14H8Z" /><circle cx="11" cy="3.4" r="3.3" /></Svg>
);

export default function App() {
  return (
    <Page>
      <Global />
      <TopBar>
        <Logo href="#"><LogoDot>i</LogoDot><LogoName>VX</LogoName><LogoTld>.cn</LogoTld></Logo>
        <Tabs>
          <Tab $w={74}>
            <Svg w={12}><path d="M1 0H9.6Q10.6 0 10.6 1V7Q10.6 8 9.6 8H4L2.4 10V8H1Q0 8 0 7V1Q0 0 1 0Z" /><path d="M2.4 3.4H3.8V4.8H2.4ZM4.7 3.4H6.1V4.8H4.7ZM7 3.4H8.4V4.8H7Z" fill="#262626" /><path d="M11.4 3H12V9.4H10.4V11.4L8.4 9.4H5.4" {...line(1)} /></Svg>
            咨询
          </Tab>
          <Tab $w={74}><Svg w={12} vb="0 0 14 14"><path d="M0 0H6V6H0ZM8 0H14V6H8ZM0 8H6V14H0Z" /><path d="M8.6 8.6H13.4V13.4H8.6Z" {...line(1.2)} /></Svg>工作台</Tab>
          <Tab $w={150} $active>
            <Svg w={16}><circle cx="8" cy="8" r="8" /><path d="M6.2 8.2A2 2 0 1 0 8.2 10.4V5.8A2 2 0 1 1 10 7.8" fill="none" stroke="#222" strokeWidth="1.3" /></Svg>
            验机小应用
            <Svg w={9} vb="0 0 10 10"><path d="M1 1 9 9M9 1 1 9" {...line(1.2)} /></Svg>
          </Tab>
          <Tab $w={34} aria-label="新建"><Plus w={11} sw={1.2} /></Tab>
        </Tabs>
        <TopRight>
          <Free>
            <Svg w={16}><circle cx="8" cy="8" r="7.2" fill="#7ccf58" stroke="#b5e8a0" strokeWidth="1.4" /><path d="M8 4.2 9 6.8 11.8 7 9.6 8.8 10.4 11.6 8 10 5.6 11.6 6.4 8.8 4.2 7 7 6.8Z" fill="#fff" /></Svg>
            免费版
          </Free>
          <Cta>升级</Cta>
          <Cta $solid>下载安装版</Cta>
          <Svg w={16} h={20} color={C.orange}><path d="M8 0 9.2 1.6Q13.4 2.8 13.4 8V13L15.6 16.4H.4L2.6 13V8Q2.6 2.8 6.8 1.6ZM5.8 17.4H10.2Q9.8 19.8 8 19.8T5.8 17.4Z" /></Svg>
          <ThinRule />
          <Svg w={30}><circle cx="15" cy="15" r="15" fill={C.orange} /><path d="M3 11.2Q5.6 9.8 7.6 7.4 10.6 5 16 5.6L21.6 6.8 19.8 8.6Q25.2 12.4 22.8 18 21.8 21 20.2 23.4L21.8 26 18.6 25 14 25.6Q15.4 22.8 18.2 22.4 19.6 18 17.2 14.4L15.2 18 13.4 13.8Q8 13.8 3 11.2Z" fill="#332a1c" /></Svg>
        </TopRight>
      </TopBar>

      <Toolbar>
        <ToolGroup>
          <Tool><Svg w={15} h={12}><path d="M0 0H5.4L6.6 1.6H14V3H0ZM0 4H15V12H0Z" /></Svg>文件</Tool>
          <Tool><Svg w={14}><path d="M0 0H2V7H12V0H14V14H0ZM4 0H6V5H4ZM8.4 0H10V5H8.4ZM2 9V10H12V9ZM2 11.4V12.4H12V11.4Z" fillRule="evenodd" /></Svg>保存</Tool>
          <Tool><Squares outline />后端资源</Tool>
          <Tool><Squares />前端资源</Tool>
          <Tool><Svg w={14}><path d="M0 0H3V14H0ZM4.4 0H14V4H4.4ZM4.4 5.4H8V14H4.4Z" /><path d="M9.8 6V13.4H13.4V6Z" {...line(1)} /></Svg>SDK资源</Tool>
          <Rule />
          <Tool>操作面板</Tool>
          <MoveBtns>
            <MoveBtn aria-label="上移"><Svg w={9} h={10}><path d="M4.5 10V1M1 4.5 4.5 1 8 4.5" {...line(1.4)} /></Svg></MoveBtn>
            <MoveBtn $dim aria-label="下移"><Svg w={9} h={10}><path d="M4.5 0V9M1 5.5 4.5 9 8 5.5" {...line(1.4)} /></Svg></MoveBtn>
          </MoveBtns>
        </ToolGroup>
        <AppManage><Tool><Svg w={14}><path d="M0 0H6V6H0ZM0 8H6V14H0ZM8 6V0H10.5L14 3.5V6ZM8 8H14V14H8Z" /></Svg>组应用管理</Tool></AppManage>
        <RunGroups>
          <RunGroup>
            预览
            <RunBtn aria-label="播放"><Svg w={14} h={16}><path d="M1 0 10 4.4 13 8 10 11.4 1 15.5Z" /><path d="M10.5 4.6 13.5 8.2 2 15.6" fill="none" stroke="#aaa" strokeWidth=".8" /></Svg></RunBtn>
            <RunBtn aria-label="二维码"><Qr /></RunBtn>
            <RunBtn aria-label="小程序码"><Qr link /></RunBtn>
          </RunGroup>
          <RunGroup>
            配置
            <RunBtn aria-label="配置"><Svg w={14}><path d="M2 0V14M7 0V14M12 0V14" {...line(1.2)} /><circle cx="2" cy="4" r="1.7" /><circle cx="7" cy="10" r="1.7" /><circle cx="12" cy="5" r="1.7" /></Svg></RunBtn>
          </RunGroup>
          <RunGroup $corner>
            发布
            <RunBtn aria-label="发布"><Svg w={16}><path d="M16 0 13.4 13.4 8.6 11.2 6.4 15.4V10.4L12.8 3 4.6 9.4 .4 7.4Z" /></Svg></RunBtn>
          </RunGroup>
        </RunGroups>
        <ViewTools>
          <HistBtn aria-label="撤销"><Svg w={14} h={10}><path d="M0 .6V7H6.6L4.4 4.8Q9.4 1.6 13.4 9 12.6 .2 7 .4 4 .6 2.4 2.8Z" /></Svg></HistBtn>
          <HistBtn $dim aria-label="重做"><Svg w={14} h={10}><path d="M14 .6V7H7.4L9.6 4.8Q4.6 1.6 .6 9 1.4 .2 7 .4 10 .6 11.6 2.8Z" /></Svg></HistBtn>
          <ViewBtn aria-label="对齐"><Svg w={17} h={19}><path d="M.5 0V18M4 14.5H11M6.5 12 4 14.5 6.5 17" {...line(1.2)} /><path d="M3 1H10V4.4H3ZM3 6.4H14V9.8H3ZM17 15V19H13Z" /></Svg></ViewBtn>
          <ViewBtn aria-label="分布"><Svg w={17} h={19}><path d="M.7 0V18M13.3 0V18" {...line(1.3)} /><path d="M5 2H9V16H5ZM17 15V19H13Z" /></Svg></ViewBtn>
          <DeviceBtn aria-label="设备"><Svg w={30} h={24} vb="0 2 30 24"><path d="M17 17H1.8Q.8 17 .8 16V4Q.8 3 1.8 3H22Q23 3 23 4V9" {...line(1.5)} /><path d="M2 14H16V16.4H2ZM8 17H11V20H8ZM5 19.4H15V21H5ZM30 22V26H26Z" /><rect x="18" y="10.5" width="6" height="10.5" rx="1" {...line(1.3)} /></Svg></DeviceBtn>
          <DeviceInput defaultValue="iPhone6/7/8 375*667" aria-label="设备尺寸" />
          <Svg w={17} h={16}><path d="M3.5 0V3M0 2.5H17M14.5 13V16" {...line(1)} /><path d="M3 3H14V14H3ZM8.5 5.2A3.2 3.2 0 1 0 8.5 11.6 3.2 3.2 0 1 0 8.5 5.2ZM8.5 6.8A1.6 1.6 0 1 1 8.5 10 1.6 1.6 0 1 1 8.5 6.8Z" fillRule="evenodd" /></Svg>
          <Zoom>
            <Svg w={14} color="#ccc"><circle cx="7" cy="7" r="7" /><path d="M3.6 7H10.4" stroke="#222" strokeWidth="1.8" /></Svg>
            100%
            <Svg w={14} color="#ccc"><circle cx="7" cy="7" r="7" /><path d="M3.6 7H10.4M7 3.6V10.4" stroke="#222" strokeWidth="1.8" /></Svg>
          </Zoom>
        </ViewTools>
      </Toolbar>

      <Body>
        <Left>
          <SearchRow>
            <SearchField>
              <SearchIcon><Search w={11} /></SearchIcon>
              <SearchInput placeholder="输入组件名称搜索" aria-label="输入组件名称搜索" />
            </SearchField>
            <FilterBtn aria-label="筛选"><Svg w={15} h={14}><path d="M0 0H14V1.6L9 6.6V14L5.4 11V6.6L0 1.6ZM10 6H15V7.4H10ZM10 9H15V10.4H10ZM10 12H15V13.4H10Z" /></Svg></FilterBtn>
          </SearchRow>
          <LeftBody>
            <Rail>
              <RailItem $h={59}><RailPad /><Svg w={13} vb="0 0 14 14"><path d="M7 0 9.2 4.6 14 5.2 10.5 8.6 11.4 13.6 7 11.2 2.6 13.6 3.5 8.6 0 5.2 4.8 4.6Z" /></Svg>收藏</RailItem>
              <RailItem $h={61} $active><Svg w={15}><path d="M0 5H3.8Q2.8 1 5.6 .8 8.6 1 7.4 5H11.4V8Q15 6.8 15 9.8T11.4 11.6V15H7.6Q8.4 11.4 5.8 11.4T4 15H0V11.2Q2.8 11.6 2.8 9.6T0 8.4Z" /></Svg>标准<br />组件</RailItem>
              <RailItem $h={60}><Module />小模块</RailItem>
              <RailItem $h={60}><Module />自定义</RailItem>
            </Rail>
            <Palette>
              <CollapseRow><Collapse aria-label="收起面板"><Svg w={8}><path d="M4 0 .8 4 4 8M7.6 0 4.4 4 7.6 8" {...line(1)} /></Svg></Collapse></CollapseRow>
              {palette.map(([title, items]) => (
                <Section key={title}>
                  <SectionHead>{title}<Down /></SectionHead>
                  <Grid>
                    {items.map(([icon, label]) => (
                      <PaletteBtn key={label}><Icon name={icon} color={title === "变量" ? C.amber : "#c6c6c6"} />{label}</PaletteBtn>
                    ))}
                  </Grid>
                </Section>
              ))}
            </Palette>
          </LeftBody>
        </Left>

        <Center>
          <ServiceBar>
            <ServiceId>服务ID：cs892gja3j50000derxg</ServiceId>
            <GreyBtn>调试</GreyBtn>
            <GreyBtn>日志</GreyBtn>
            <ArrowBtn aria-label="后退"><Svg w={16}><path d="M16 8H1M8 1 1 8 8 15" {...line(1.2)} /></Svg></ArrowBtn>
            <ArrowBtn $dim aria-label="前进"><Svg w={16}><path d="M0 8H15M8 1 15 8 8 15" {...line(1.2)} /></Svg></ArrowBtn>
          </ServiceBar>
          <Strip><StripCard><StripSlot /></StripCard></Strip>
          <DefBar>
            服务定义
            <Push />
            <Pill><Switch type="checkbox" defaultChecked $tone="#4d4532" /><Hot>行间备注</Hot></Pill>
            <Pill><Hot>子层</Hot><Switch type="checkbox" $tone={C.black} />同层</Pill>
            <Chip $bg="#37323a">循环</Chip>
            <Chip $bg="#303837">动作</Chip>
            <Chip $bg="#30343e">条件</Chip>
            <Chip $bg="#3a352c">回调</Chip>
            <Chip $bg="#37352d">备注</Chip>
            <Chip $bg="#363630">分组</Chip>
            <EventBtn>事件<Plus w={10} sw={1.6} /></EventBtn>
            <NoteBtn><Svg w={13} h={12}><path d="M.6 .5 3.6 6 .6 11.5M5 .5 8 6 5 11.5M9.4 .5 12.4 6 9.4 11.5" {...line(1)} /></Svg>备注</NoteBtn>
          </DefBar>
          <Canvas>
            <Links width="180" height="840" fill="none">
              {links.map((l, i) => {
                const ys = [...l.to, ...(l.bare ?? [])];
                return (
                  <g key={i}>
                    <path d={`M${l.x + 0.5} ${l.y}V${Math.max(...ys) + 1}` + ys.map((y) => `M${l.x} ${y + 0.5}H${l.x + 21}`).join("")} stroke={l.color} />
                    {l.to.map((y) => (
                      <g key={y}>
                        <circle cx={l.x + 10.5} cy={y + 0.5} r="5.5" fill={l.color} />
                        <path d={`M${l.x + 7.5} ${y + 0.5}h6`} stroke="#222" />
                      </g>
                    ))}
                  </g>
                );
              })}
            </Links>
            <Row><span /><FrameTitle>积分兑换</FrameTitle><span /></Row>
            {steps.map((s) => (
              <Row key={s.no}>
                <LineNo>{s.no}</LineNo>
                <Framed><StepBody s={s} /></Framed>
                {s.kind === "action" ? <BreakBtn aria-label="断点"><Break /></BreakBtn> : <span />}
              </Row>
            ))}
          </Canvas>
        </Center>

        <Right>
          <TreeHead>
            <TreeTab>对象树<Svg w={14} h={15} color="#ccc"><path d="M7 0 13.4 5 7 10 .6 5Z" /><path d="M1 9.4 7 14 13 9.4" {...line(1.2)} /></Svg></TreeTab>
            <NoteToggle>备注<Switch type="checkbox" $tone={C.black} /></NoteToggle>
            <SearchBtn aria-label="搜索"><Search w={15} /></SearchBtn>
          </TreeHead>
          <TreeBody>
            <Tree>
              {nodes.map((n, i) => (
                <TreeRow key={i}>
                  <FlowCell $on={!!n.flow}>{n.flow && <FlowIcon kind={n.flow} />}</FlowCell>
                  <EyeCell $off={n.eye === "off"}>{n.eye && <Eye off={n.eye === "off"} />}</EyeCell>
                  <Twist $level={n.l} aria-label="展开" disabled={!n.t}>{n.t === "down" ? <Down /> : n.t === "right" ? <RightTri /> : null}</Twist>
                  <Icon name={n.i} color={nodeColor(n)} />
                  <NodeName>{n.n}</NodeName>
                  {n.info && <InfoMark><Icon name="info" color="#f0f0f0" /></InfoMark>}
                  {n.ring && <Ring />}
                </TreeRow>
              ))}
            </Tree>
            <ToolRail>
              <ToolSet $pitch={34}>
                {[["box", "#6a6a6a"], ["info", "#b4b4b4"], ["action", "#5c89d8"], ["nodes", "#44608f"], ["fx", "#5c89d8"], ["swap", "#777"], ["glass", "#777"]].map(([n, c]) => (
                  <RailBtn key={n} aria-label={n}><Icon name={n} color={c} /></RailBtn>
                ))}
              </ToolSet>
              <ToolSet $pitch={30}>
                {["T", "N", "N0", "01", "X", "list", "grid", "object", "objects", "time"].map((n) => (
                  <RailBtn key={n} aria-label={n}><Icon name={n} color={C.orange} /></RailBtn>
                ))}
              </ToolSet>
            </ToolRail>
            <Tooltip>确认兑换</Tooltip>
            <HelpCenter>
              <span>帮助中心</span>
              <Svg w={18} h={18}><path d="M0 0H18V15H5L2 18V15H0Z" fill="#fff4d6" /><text x="9" y="12" fontSize="13" fontWeight="700" textAnchor="middle" fill="#ffa500" fontFamily="Liberation Sans">?</text></Svg>
            </HelpCenter>
          </TreeBody>
        </Right>
      </Body>
    </Page>
  );
}
